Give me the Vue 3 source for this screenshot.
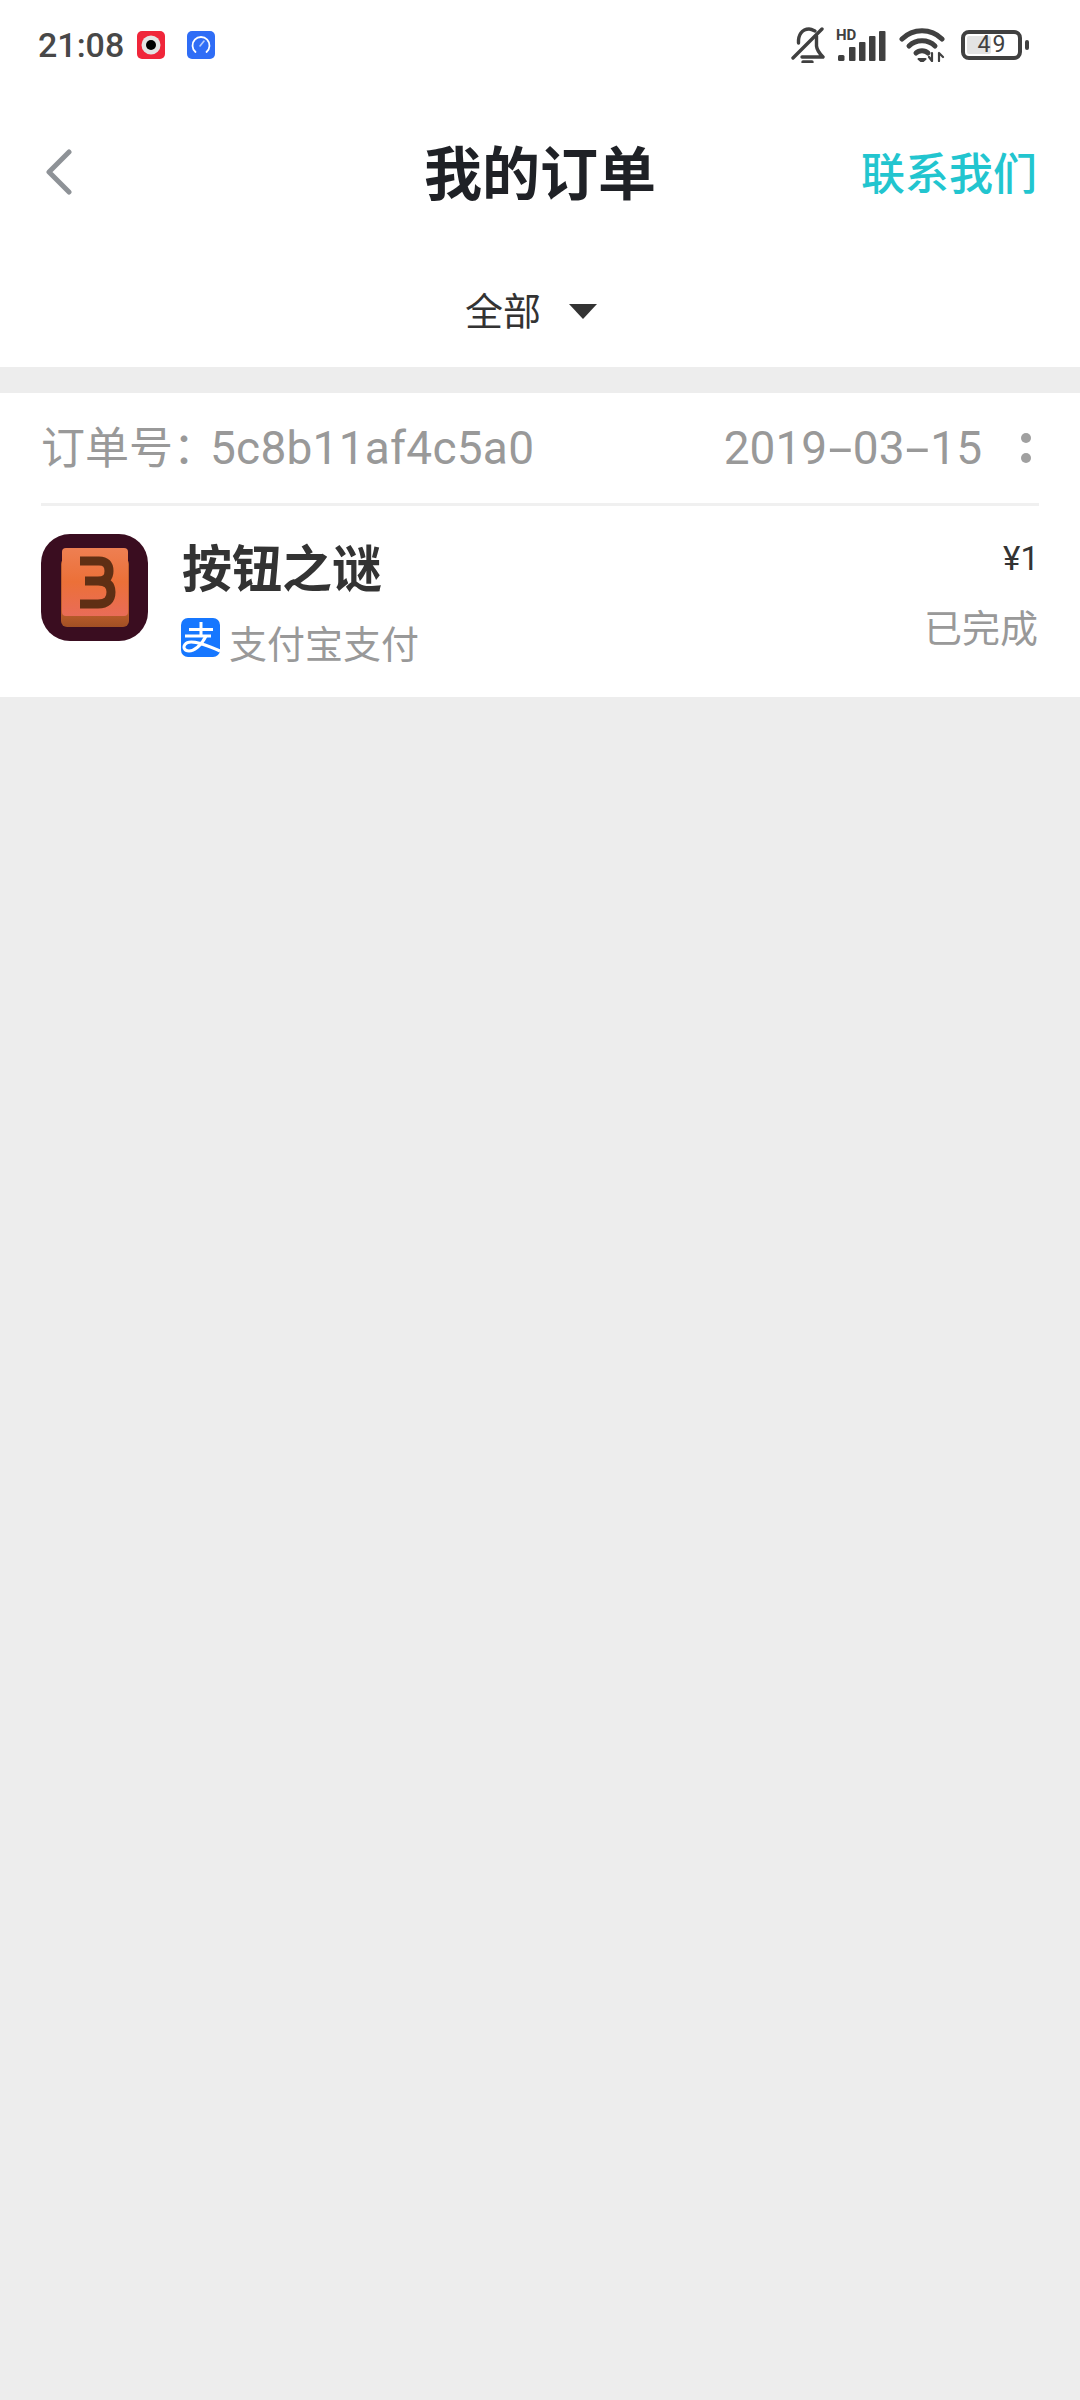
<script setup>
const order = {
  no: '5c8b11af4c5a0',
  dateParts: ['2019', '03', '15'],
  name: '按钮之谜',
  pay: '支付宝支付',
  price: '¥1',
  status: '已完成'
}
</script>

<template>
  <div class="page">
    <header class="top">
      <div class="status">
        <div class="status-left">
          <span class="time">21:08</span>
          <svg class="mini rec" viewBox="0 0 28 28">
            <rect width="28" height="28" rx="5" fill="#f0263a" />
            <circle cx="14" cy="14" r="9.5" fill="#e4e4e4" />
            <circle cx="14" cy="14" r="5" fill="#000" />
          </svg>
          <svg class="mini speed" viewBox="0 0 28 28">
            <rect width="28" height="28" rx="5" fill="#2f6df6" />
            <path d="M8.5 21 A8.5 8.5 0 1 1 19.5 21" fill="none" stroke="#fff" stroke-width="1.8" stroke-linecap="round" />
            <path d="M13 15 L17 10" stroke="#b9cdfb" stroke-width="1.6" stroke-linecap="round" />
          </svg>
        </div>
        <div class="status-right">
          <svg class="bell" viewBox="0 0 34 36" fill="none" stroke="#404040" stroke-width="3.4" stroke-linecap="round" stroke-linejoin="round">
            <path d="M7.5 16 C7 8 11 2 18 2 C20 2 22 3 24 4" />
            <path d="M25.5 9 V19 C26 24 30 28 32 30 H11" />
            <path d="M2 31 L31 2" />
            <path d="M12 35 H21" />
          </svg>
          <div class="signal">
            <span class="hd">HD</span>
            <svg viewBox="0 0 50 34" class="bars" fill="#404040">
              <rect x="2" y="27" width="6.5" height="6" rx="1.5" />
              <rect x="13" y="19" width="6.5" height="14" rx="1" />
              <rect x="23" y="14" width="6.5" height="19" rx="1" />
              <rect x="33" y="8" width="6.5" height="25" rx="1" />
              <rect x="43" y="3" width="6.5" height="30" rx="1" />
            </svg>
          </div>
          <svg class="wifi" viewBox="0 0 46 34" fill="none" stroke="#404040" stroke-width="5" stroke-linecap="round">
            <path d="M3 11 C14 0 32 0 43 11" />
            <path d="M10 18 C17 11 29 11 36 18" />
            <path d="M17 25 C20 22 26 22 29 25" />
            <path d="M19.5 31 L23 34 L26.5 31 Z" fill="#404040" stroke-width="2" stroke-linejoin="round" />
            <path d="M33 25 V33 M40 25 V33 M30 29 L33 33 M40 25 L44 29" stroke-width="2.2" />
          </svg>
          <div class="battery">
            <div class="battery-body">
              <span class="battery-fill"></span>
              <span class="battery-text">49</span>
            </div>
            <span class="battery-nub"></span>
          </div>
        </div>
      </div>

      <nav class="nav">
        <svg class="back" viewBox="0 0 26 46" fill="none" stroke="#8e9297" stroke-width="5" stroke-linecap="round" stroke-linejoin="round">
          <path d="M23 3 L3 23 L23 43" />
        </svg>
        <h1 class="title">我的订单</h1>
        <a class="contact">联系我们</a>
      </nav>

      <div class="filter">
        <span class="filter-label">全部</span>
        <span class="caret"></span>
      </div>
    </header>

    <section class="card">
      <div class="card-head">
        <span class="order-no">订单号：<span class="order-id">{{ order.no }}</span></span>
        <span class="date">
          <template v-for="(part, i) in order.dateParts" :key="part">
            <span v-if="i" class="dash">-</span>{{ part }}
          </template>
        </span>
        <span class="more"><i></i><i></i></span>
      </div>
      <div class="card-body">
        <svg class="app-icon" viewBox="0 0 107 107">
          <defs>
            <linearGradient id="faceGrad" x1="0" y1="0" x2="0" y2="1">
              <stop offset="0" stop-color="#ee7f52" />
              <stop offset="0.5" stop-color="#ec7038" />
              <stop offset="1" stop-color="#e96c58" />
            </linearGradient>
            <linearGradient id="sideGrad" x1="0" y1="0" x2="0" y2="1">
              <stop offset="0.75" stop-color="#c0602c" />
              <stop offset="1" stop-color="#a14f24" />
            </linearGradient>
          </defs>
          <rect width="107" height="107" rx="29" fill="#3a0d20" />
          <rect x="20" y="24" width="68" height="69" rx="6" fill="url(#sideGrad)" />
          <rect x="21" y="14" width="66" height="68" rx="4" fill="url(#faceGrad)" />
          <path d="M39 27 H58 Q68 27 68 37 Q68 47 57 47 H44 M57 47 Q70 47 70 58 Q70 70 57 70 H39" fill="none" stroke="#5f2f14" stroke-width="9" />
        </svg>
        <div class="info">
          <div class="app-name">{{ order.name }}</div>
          <div class="pay">
            <svg class="alipay" viewBox="0 0 39 39" fill="none">
              <rect width="39" height="39" rx="7" fill="#1677ff" />
              <path d="M8 11.5 H32 M4 18 H30 M20 4 V18" stroke="#fff" stroke-width="3" />
              <path d="M25 18 C20 28 13 33 8 33 C3 33 2 29 4 26.5 C7 22 16 23 39 33" stroke="#fff" stroke-width="3" />
            </svg>
            <span class="pay-text">{{ order.pay }}</span>
          </div>
        </div>
        <div class="summary">
          <div class="price">{{ order.price }}</div>
          <div class="state">{{ order.status }}</div>
        </div>
      </div>
    </section>
  </div>
</template>

<style>
html, body { margin: 0; background: #ededed; }
</style>

<style scoped>
.page {
  width: 1080px;
  height: 2400px;
  background: #ededed;
  font-family: Roboto, "Noto Sans CJK SC", sans-serif;
}
.top { background: #fff; }
.status {
  height: 90px;
  display: flex;
  justify-content: space-between;
  align-items: center;
  padding: 0 51px 0 38px;
}
.status-left, .status-right { display: flex; align-items: center; }
.time { font-size: 34px; font-weight: 500; color: #484848; line-height: 40px; width: 99px; }
.mini { width: 28px; height: 28px; }
.rec { margin-right: 22px; }
.bell { width: 34px; height: 36px; margin-right: 11px; }
.signal { position: relative; width: 50px; height: 34px; margin-right: 13px; }
.bars { width: 50px; height: 34px; display: block; }
.hd {
  position: absolute;
  left: 0;
  top: 0;
  font-size: 15px;
  font-weight: 700;
  line-height: 15px;
  color: #404040;
}
.wifi { width: 46px; height: 34px; margin-right: 16px; }
.battery { display: flex; align-items: center; gap: 3px; }
.battery-body {
  position: relative;
  width: 61px;
  height: 30px;
  box-sizing: border-box;
  border: 4px solid #404040;
  border-radius: 8px;
  display: flex;
  align-items: center;
  justify-content: center;
}
.battery-fill {
  position: absolute;
  left: 2px;
  top: 2px;
  bottom: 2px;
  width: 24px;
  background: #e3e3e3;
  border-radius: 2px;
}
.battery-text { position: relative; left: 1px; font-size: 23px; line-height: 22px; color: #404040; letter-spacing: 2px; }
.battery-nub { width: 4px; height: 10px; background: #404040; border-radius: 2px; }

.nav {
  height: 170px;
  display: grid;
  grid-template-columns: 1fr auto 1fr;
  align-items: center;
}
.back { width: 26px; height: 46px; margin: 0 0 6px 46px; }
.title {
  margin: 0;
  font-size: 58px;
  font-weight: 700;
  line-height: 70px;
  color: #1f2126;
}
.contact {
  justify-self: end;
  margin-right: 43px;
  font-size: 44px;
  font-weight: 500;
  line-height: 56px;
  color: #22c5cf;
}
.filter {
  height: 107px;
  box-sizing: border-box;
  padding: 0 18px 4px 0;
  display: flex;
  align-items: center;
  justify-content: center;
  gap: 28px;
}
.filter-label { font-size: 38px; line-height: 48px; color: #333; }
.caret {
  width: 0;
  height: 0;
  border-left: 14px solid transparent;
  border-right: 14px solid transparent;
  border-top: 15px solid #333;
}

.card { margin-top: 26px; background: #fff; padding: 0 41px; }
.card-head {
  height: 110px;
  display: flex;
  align-items: center;
  border-bottom: 3px solid #f0f0f0;
  font-size: 44px;
  color: #999;
}
.order-no { line-height: 56px; margin-right: auto; }
.order-id { font-size: 46px; letter-spacing: 0.25px; margin-left: -7px; }
.date { line-height: 56px; font-size: 46px; white-space: nowrap; }
.dash { display: inline-block; transform: scaleX(1.9); margin: 0 6.5px; }
.more { display: flex; flex-direction: column; gap: 10px; margin: 0 8px 0 39px; }
.more i { display: block; width: 10px; height: 10px; border-radius: 50%; background: #a0a0a0; }

.card-body { height: 191px; display: flex; align-items: flex-start; padding-top: 28px; box-sizing: border-box; }
.app-icon { width: 107px; height: 107px; flex: none; margin-right: 33px; }
.info { display: flex; flex-direction: column; }
.app-name {
  margin: 5px 0 0 1px;
  font-size: 50px;
  font-weight: 700;
  line-height: 62px;
  color: #333;
}
.pay { display: flex; align-items: flex-start; margin-top: 17px; }
.alipay { width: 39px; height: 39px; flex: none; margin-right: 9px; }
.pay-text { font-size: 38px; line-height: 48px; color: #999; margin-top: 3px; }
.summary { margin-left: auto; text-align: right; }
.price { font-size: 33px; line-height: 40px; color: #333; margin-top: 5px; }
.state { font-size: 38px; line-height: 48px; color: #999; margin: 26px 1px 0 0; }
</style>
